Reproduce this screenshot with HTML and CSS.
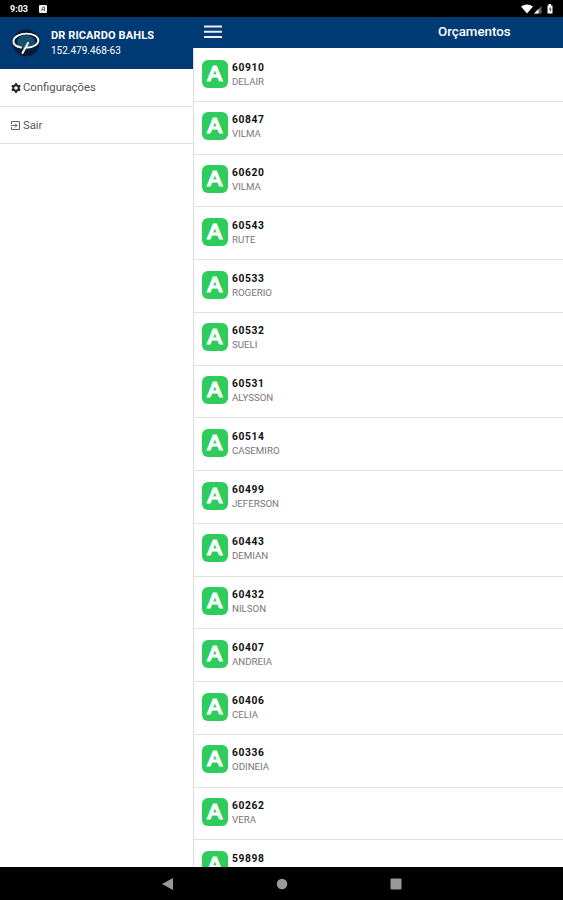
FILE: index.html
```html
<!DOCTYPE html>
<html lang="pt-BR">
<head>
  <meta charset="UTF-8">
  <title>Orçamentos</title>
  <link rel="stylesheet" href="styles.css">
</head>
<body>
  <div class="statusbar">
    <span class="time">9:03</span>
    <svg width="8" height="8" viewBox="0 0 8 8"><rect width="8" height="8" rx="1" fill="#eee"/><path d="M2.5 6L4 2h1.5v4M3 4.6h2.5" fill="none" stroke="#555" stroke-width=".8"/></svg>
    <svg class="signals" width="34" height="12" viewBox="0 0 34 12">
      <path d="M0 3.6Q6 -.6 12 3.6L6 10.5Z" fill="#fff"/>
      <path d="M13 10.5L20.5 3v7.5Z" fill="#666"/>
      <path d="M13 10.5L17.5 6v4.5Z" fill="#fff"/>
      <path d="M26.5 2.5h1V1h2.5v1.5h1.5v8h-5Z" fill="#fff"/>
      <path d="M29.4 3.5L28 6.5h1V9l1.5-3.3h-1.1Z" fill="#333"/>
    </svg>
  </div>

  <div class="app">
    <aside class="menu">
      <div class="profile">
        <svg width="28" height="28" viewBox="0 0 28 28">
          <circle cx="14" cy="14" r="13.5" fill="#071b32"/>
          <ellipse cx="14" cy="13" rx="9" ry="7" fill="#12506c"/>
          <path d="M9 18.5C4.5 17.6 1.2 15.5 1.5 12C2 7.5 8 4.6 14.5 4.6C21 4.6 26.5 7.2 26.3 11.7C26 16 20.5 18.7 14.5 18.5" fill="none" stroke="#f5f9fb" stroke-width="1.9" stroke-linecap="round"/>
          <path d="M16 14L10.5 24" stroke="#f5f9fb" stroke-width="2" stroke-linecap="round"/>
        </svg>
        <div>
          <div class="name">DR RICARDO BAHLS</div>
          <div class="document">152.479.468-63</div>
        </div>
      </div>
      <div class="menu-item">
        <svg width="10" height="10" viewBox="0 0 10 10"><circle cx="5" cy="5" r="2.8" fill="none" stroke="#222" stroke-width="2"/><path d="M5 0v2M5 8v2M.7 2.500l1.700 1M7.600 6.500l1.700 1M.7 7.500l1.700-1M7.600 3.500l1.700-1" stroke="#222" stroke-width="1.800"/></svg>
        <span>Configurações</span>
      </div>
      <div class="menu-item exit">
        <svg width="9" height="9" viewBox="0 0 9 9"><path d="M.5 3V.5h8v8h-8V6M0 4.5h6M4 2.5l2 2-2 2" fill="none" stroke="#555" stroke-width=".9"/></svg>
        <span>Sair</span>
      </div>
    </aside>

    <main class="content">
      <header class="toolbar">
        <svg width="18" height="14" viewBox="0 0 18 14"><path d="M0 1.5h18M0 6.7h18M0 12h18" stroke="#e8edf8" stroke-width="2"/></svg>
        <h1>Orçamentos</h1>
      </header>
      <div class="list">
        <div class="row"><span class="badge">A</span><div><b>60910</b><p>DELAIR</p></div></div>
        <div class="row"><span class="badge">A</span><div><b>60847</b><p>VILMA</p></div></div>
        <div class="row"><span class="badge">A</span><div><b>60620</b><p>VILMA</p></div></div>
        <div class="row"><span class="badge">A</span><div><b>60543</b><p>RUTE</p></div></div>
        <div class="row"><span class="badge">A</span><div><b>60533</b><p>ROGERIO</p></div></div>
        <div class="row"><span class="badge">A</span><div><b>60532</b><p>SUELI</p></div></div>
        <div class="row"><span class="badge">A</span><div><b>60531</b><p>ALYSSON</p></div></div>
        <div class="row"><span class="badge">A</span><div><b>60514</b><p>CASEMIRO</p></div></div>
        <div class="row"><span class="badge">A</span><div><b>60499</b><p>JEFERSON</p></div></div>
        <div class="row"><span class="badge">A</span><div><b>60443</b><p>DEMIAN</p></div></div>
        <div class="row"><span class="badge">A</span><div><b>60432</b><p>NILSON</p></div></div>
        <div class="row"><span class="badge">A</span><div><b>60407</b><p>ANDREIA</p></div></div>
        <div class="row"><span class="badge">A</span><div><b>60406</b><p>CELIA</p></div></div>
        <div class="row"><span class="badge">A</span><div><b>60336</b><p>ODINEIA</p></div></div>
        <div class="row"><span class="badge">A</span><div><b>60262</b><p>VERA</p></div></div>
        <div class="row"><span class="badge">A</span><div><b>59898</b></div></div>
      </div>
    </main>
  </div>

  <div class="navbar">
    <svg width="12" height="12" viewBox="0 0 12 12"><path d="M0 6L11 0v12Z" fill="#999"/></svg>
    <svg width="12" height="12" viewBox="0 0 12 12"><circle cx="6" cy="6" r="5.3" fill="#999"/></svg>
    <svg width="12" height="12" viewBox="0 0 12 12"><rect x=".5" y=".5" width="11" height="11" rx="1" fill="#999"/></svg>
  </div>
</body>
</html>
```
FILE: styles.css
```css
* {
  box-sizing: border-box;
}
body {
  margin: 0;
  height: 900px;
  display: flex;
  flex-direction: column;
  overflow: hidden;
  font-family: Roboto, sans-serif;
  background: #fff;
}
svg {
  display: block;
  flex: none;
}
.statusbar {
  height: 17px;
  flex: none;
  display: flex;
  align-items: center;
  padding: 1px 8px 0 10px;
  background: #000;
  color: #fff;
}
.time {
  width: 29px;
  font-size: 9px;
  font-weight: 700;
}
.signals {
  margin-left: auto;
}
.app {
  flex: 1;
  min-height: 0;
  display: flex;
}
.menu {
  width: 193px;
  flex: none;
}
.profile {
  height: 52px;
  display: flex;
  align-items: center;
  gap: 11px;
  padding-left: 12px;
  background: #003a75;
  color: #fff;
}
.name {
  font-size: 11px;
  line-height: 14px;
  font-weight: 700;
  letter-spacing: 0.12px;
}
.document {
  font-size: 10px;
  line-height: 15px;
}
.menu-item {
  height: 38px;
  display: flex;
  align-items: center;
  gap: 2px;
  padding-left: 11px;
  border-bottom: 1px solid #e2e2e2;
  font-size: 11.3px;
  color: #555;
}
.exit {
  height: 37px;
  gap: 3px;
}
.content {
  flex: 1;
  min-width: 0;
  display: flex;
  flex-direction: column;
}
.toolbar {
  height: 30.5px;
  flex: none;
  display: flex;
  align-items: center;
  padding-left: 11px;
  background: #003a75;
  color: #fff;
}
.toolbar h1 {
  margin: -2px 0 0 216px;
  font-size: 13.3px;
  font-weight: 500;
}
.list {
  flex: 1;
  min-height: 0;
  overflow: hidden;
  border-left: 1px solid #ddd;
  padding-top: 1.5px;
}
.row {
  height: 52.75px;
  display: flex;
  padding: 10.7px 0 0 7.6px;
  border-bottom: 1px solid #e2e2e2;
}
.badge {
  width: 26px;
  height: 28px;
  margin-right: 4.4px;
  border-radius: 6px;
  background: #2dcc5c;
  color: #fff;
  font: 700 21.5px/26px Lato, sans-serif;
  -webkit-text-stroke: 1px #fff;
  text-align: center;
}
.row b {
  display: block;
  margin-top: 1px;
  font-size: 10.3px;
  line-height: 14px;
  letter-spacing: 0.6px;
  color: #111;
}
.row p {
  margin: 0;
  font-size: 9.7px;
  line-height: 14px;
  color: #777;
}
.navbar {
  height: 33px;
  flex: none;
  display: flex;
  align-items: center;
  gap: 102px;
  padding-left: 162px;
  background: #000;
}
```
